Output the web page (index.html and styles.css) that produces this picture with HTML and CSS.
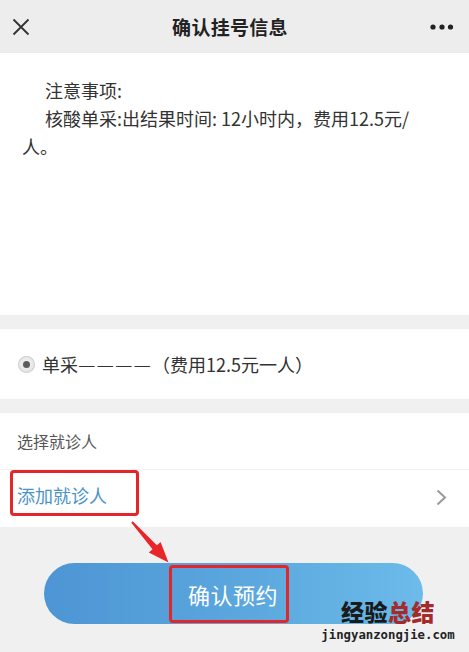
FILE: index.html
```html
<!DOCTYPE html>
<html lang="zh">
<head>
<meta charset="utf-8">
<link rel="stylesheet" href="styles.css">
</head>
<body>
<div class="page">
  <header class="topbar">
    <svg class="close" width="18" height="18" viewBox="0 0 18 18"><path d="M1.5 1.5 L16.5 16.5 M16.5 1.5 L1.5 16.5" stroke="#333" stroke-width="1.8" fill="none"/></svg>
    <h1 class="title">确认挂号信息</h1>
    <svg class="more" width="24" height="6" viewBox="0 0 24 6"><circle cx="3" cy="3" r="2.6" fill="#222"/><circle cx="12" cy="3" r="2.6" fill="#222"/><circle cx="20.5" cy="3" r="2.6" fill="#222"/></svg>
  </header>

  <section class="notice">
    <p class="para">注意事项:</p>
    <p class="para">核酸单采:出结果时间: 12小时内，费用12.5元/人。</p>
  </section>

  <section class="option">
    <span class="radio"><span class="dot"></span></span>
    <span class="option-text">单采<span class="dashes">————</span>（费用12.5元一人）</span>
  </section>

  <section class="patient">
    <div class="label-row">选择就诊人</div>
    <div class="add-row">
      <span class="mark mark-add">添加就诊人</span>
      <svg class="chev" width="11" height="17" viewBox="0 0 11 17"><path d="M1.5 1.5 L9 8.5 L1.5 15.5" stroke="#999" stroke-width="2" fill="none"/></svg>
    </div>
  </section>

  <div class="actions">
    <button class="confirm"><span class="mark mark-btn">确认预约</span></button>
  </div>

  <svg class="arrow" width="60" height="55" viewBox="120 515 60 55"><polygon points="131.3,522.7 132.7,521.3 156.9,545.2 160.6,541.9 168.5,562.5 148.8,552.5 152.5,549.2" fill="#e8262a"/></svg>

  <div class="watermark">
    <div class="wm-cn"><span class="wm-black">经验</span><span class="wm-red">总结</span></div>
    <div class="wm-en">jingyanzongjie.com</div>
  </div>
</div>
</body>
</html>
```

FILE: styles.css
```css
* { box-sizing: border-box; }
html, body { margin: 0; padding: 0; }
body {
  background: #f0f0f0;
  font-family: "Noto Sans CJK SC", "Noto Sans", sans-serif;
  color: #333;
}
.page {
  position: relative;
  width: 469px;
  height: 652px;
  overflow: hidden;
}
.topbar {
  height: 53px;
  background: #ededed;
  display: flex;
  align-items: center;
  justify-content: space-between;
  padding: 0 15px 0 12px;
}
.close { display: block; margin-top: 1px; }
.title {
  margin: 0;
  font-size: 19px;
  font-weight: 700;
  color: #222;
  letter-spacing: 0.3px;
}
.more { display: block; margin-top: 0; }

.notice {
  background: #fff;
  height: 262px;
  padding: 23px 26px 0 22px;
}
.para {
  margin: 0;
  font-size: 18px;
  line-height: 28px;
  text-indent: 23px;
  color: #333;
}

.option {
  margin-top: 14px;
  background: #fff;
  height: 70px;
  display: flex;
  align-items: center;
  padding-left: 18px;
  gap: 7px;
}
.radio {
  width: 17px;
  height: 17px;
  border-radius: 50%;
  background: radial-gradient(circle at 50% 45%, #f4f4f4 0%, #dcdcdc 100%);
  box-shadow: inset 0 0 0 1px #d2d2d2;
  display: flex;
  align-items: center;
  justify-content: center;
}
.dot {
  width: 7px;
  height: 7px;
  border-radius: 50%;
  background: #5c5c5c;
}
.option-text {
  font-size: 18px;
  color: #333;
}
.dashes {
  font-family: "Liberation Sans", sans-serif;
  font-size: 15.5px;
  letter-spacing: 3px;
  margin-left: 1px;
  margin-right: -1px;
  vertical-align: 2px;
}

.patient {
  margin-top: 14px;
  background: #fff;
}
.label-row {
  height: 57px;
  display: flex;
  align-items: center;
  padding-left: 17px;
  font-size: 16px;
  color: #555;
  border-bottom: 1px solid #f2f2f2;
}
.add-row {
  height: 57px;
  display: flex;
  align-items: flex-start;
  justify-content: space-between;
  padding: 0 22px 0 10px;
}
.mark {
  border: 3px solid #e4252a;
  border-radius: 4px;
  display: inline-flex;
  align-items: center;
}
.mark-add {
  height: 46px;
  padding: 3px 29px 0 4px;
  font-size: 18px;
  color: #4a94c6;
}
.chev { align-self: center; margin-top: -3px; }

.actions {
  padding: 36px 0 0 44px;
}
.confirm {
  width: 379px;
  height: 61px;
  border: none;
  border-radius: 31px;
  background: linear-gradient(90deg, #4d95d4 0%, #5aa6dd 50%, #6cbbea 100%);
  display: flex;
  align-items: center;
  padding: 0 0 0 125px;
  font-family: inherit;
}
.mark-btn {
  height: 58px;
  padding: 0 8px 0 16px;
  font-size: 22px;
  color: #fff;
  letter-spacing: 0.5px;
}

.arrow {
  position: absolute;
  left: 120px;
  top: 515px;
}

.watermark {
  position: absolute;
  left: 320px;
  top: 598px;
  width: 136px;
  text-align: center;
}
.wm-cn {
  font-size: 23px;
  font-weight: 900;
  line-height: 26px;
  letter-spacing: 0.5px;
}
.wm-black { color: #1a1a1a; }
.wm-red { color: #a52a2a; }
.wm-en {
  font-family: "DejaVu Sans Mono", monospace;
  font-weight: 700;
  font-size: 12.3px;
  line-height: 16px;
  color: #222;
  margin-top: 3px;
}
```
